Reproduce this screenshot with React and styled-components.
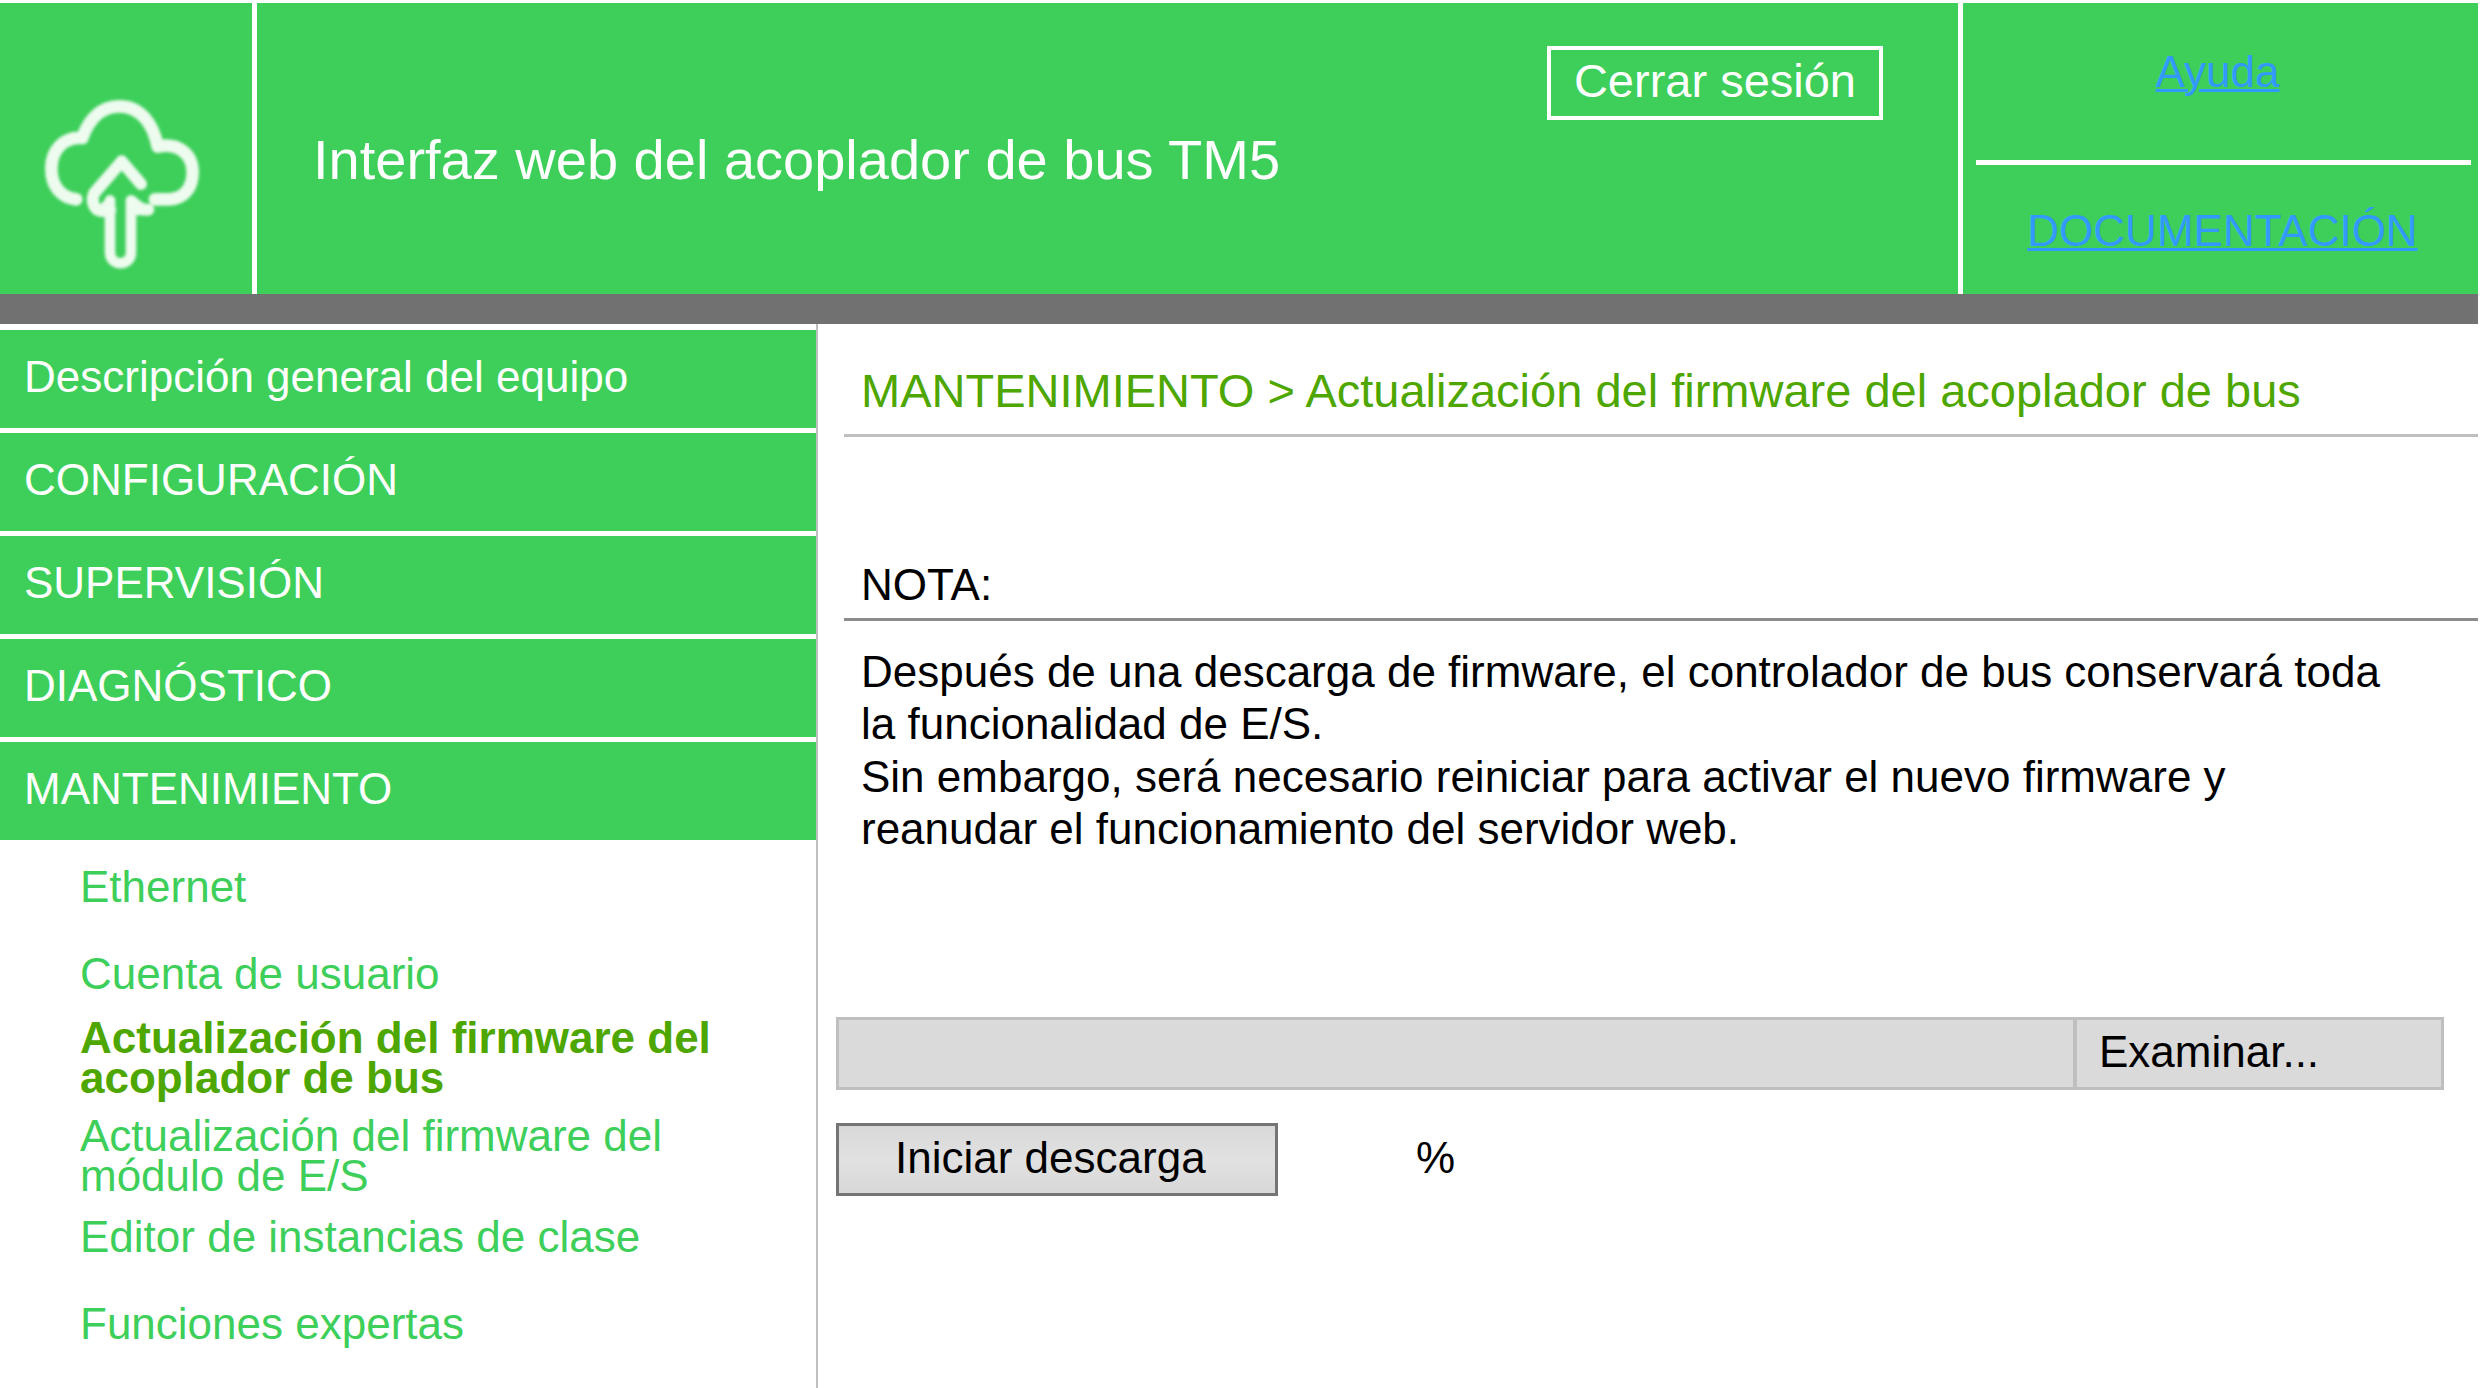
import React from 'react'
import styled, { createGlobalStyle } from 'styled-components'

const menu = [
  'Descripción general del equipo',
  'CONFIGURACIÓN',
  'SUPERVISIÓN',
  'DIAGNÓSTICO',
  'MANTENIMIENTO',
]

const submenu = [
  { label: 'Ethernet', gap: 47 },
  { label: 'Cuenta de usuario', gap: 24 },
  { label: 'Actualización del firmware del acoplador de bus', gap: 18, active: true },
  { label: 'Actualización del firmware del módulo de E/S', gap: 21 },
  { label: 'Editor de instancias de clase', gap: 47 },
  { label: 'Funciones expertas', gap: 0 },
]

const CloudIcon = () => (
  <Cloud viewBox="130 290 480 520" aria-hidden="true">
    <defs>
      <filter id="soft">
        <feGaussianBlur stdDeviation="4" />
      </filter>
    </defs>
    <g fill="none" stroke="#eefbef" strokeLinecap="round" filter="url(#soft)">
      {/* cloud outline, open at the bottom */}
      <path
        strokeWidth="38"
        strokeLinejoin="round"
        d="M230 597 C183 592 155 556 155 505 C155 448 193 409 248 413 C268 354 307 318 358 318 C420 318 460 366 474 439 C534 426 579 460 579 516 C579 566 549 597 508 597 L466 597"
      />
      {/* arrow head and stem */}
      <path
        strokeWidth="36"
        strokeLinejoin="round"
        d="M424 551 L366 483 L284 578 C274 598 280 630 306 632 L332 630"
      />
      <path
        strokeWidth="32"
        strokeLinejoin="round"
        d="M331 600 L331 755 C331 800 394 800 394 755 L394 600"
      />
      <path strokeWidth="36" strokeLinejoin="round" d="M397 604 L402 626 L446 628" />
      <path strokeWidth="22" d="M326 604 L308 622 M404 602 L426 618" />
    </g>
  </Cloud>
)

export default function App() {
  return (
    <Page>
      <GlobalStyle />
      <Header>
        <Brand>
          <CloudIcon />
        </Brand>
        <TitleBar>
          <h1>Interfaz web del acoplador de bus TM5</h1>
          <LogoutButton type="button">Cerrar sesión</LogoutButton>
        </TitleBar>
        <Links>
          <LinkCell>
            <a href="#ayuda">Ayuda</a>
          </LinkCell>
          <LinkDivider />
          <LinkCell>
            <a href="#documentacion">DOCUMENTACIÓN</a>
          </LinkCell>
        </Links>
      </Header>

      <Body>
        <Sidebar>
          <Menu>
            {menu.map((item) => (
              <li key={item}>
                <MenuLink href="#menu">{item}</MenuLink>
              </li>
            ))}
          </Menu>
          <SubMenu>
            {submenu.map((item) => (
              <SubItem key={item.label} $gap={item.gap}>
                <SubLink href="#submenu" $active={item.active}>
                  {item.label}
                </SubLink>
              </SubItem>
            ))}
          </SubMenu>
        </Sidebar>

        <Content>
          <Breadcrumb>MANTENIMIENTO &gt; Actualización del firmware del acoplador de bus</Breadcrumb>
          <NoteTitle>NOTA:</NoteTitle>
          <NoteText>
            <p>
              Después de una descarga de firmware, el controlador de bus conservará toda la
              funcionalidad de E/S.
            </p>
            <p>
              Sin embargo, será necesario reiniciar para activar el nuevo firmware y reanudar el
              funcionamiento del servidor web.
            </p>
          </NoteText>

          <FileRow>
            <FileName type="text" aria-label="Archivo de firmware" readOnly />
            <BrowseButton type="button">Examinar...</BrowseButton>
          </FileRow>
          <DownloadRow>
            <StartButton type="button">Iniciar descarga</StartButton>
            <span>%</span>
          </DownloadRow>
        </Content>
      </Body>
    </Page>
  )
}

const green = '#3dcf5a'
const darkGreen = '#4ea600'

const GlobalStyle = createGlobalStyle`
* {
  box-sizing: border-box;
}

body {
  margin: 0;
  background: #fff;
}

h1, h2, h3, p, ul {
  margin: 0;
  padding: 0;
  font-weight: 400;
}

ul {
  list-style: none;
}

button, input {
  font: inherit;
  color: inherit;
  border-radius: 0;
  margin: 0;
}
`

const Page = styled.div`
  display: flex;
  flex-direction: column;
  min-height: 100vh;
  padding: 3px 2px 0 0;
  font-family: "Liberation Sans", Arial, sans-serif;
  font-size: 44px;
  line-height: 50px;
  color: #000;
`

const Header = styled.header`
  display: grid;
  grid-template-columns: 252px 1fr 520px;
  min-height: 321px;
  background: ${green};
  border-bottom: 30px solid #717171;
`

const Brand = styled.div`
  padding: 94px 0 0 43px;
`

const Cloud = styled.svg`
  display: block;
  width: 160px;
  overflow: visible;
`

const TitleBar = styled.div`
  display: flex;
  align-items: center;
  justify-content: space-between;
  padding: 0 75px 0 56px;
  border-left: 5px solid #fff;
  color: #fff;

  h1 {
    padding-top: 22px;
    font-size: 56px;
    line-height: 64px;
  }
`

const LogoutButton = styled.button`
  align-self: flex-start;
  margin-top: 43px;
  padding: 6px 23px 10px;
  border: 4px solid #fff;
  background: none;
  font-size: 47px;
`

const Links = styled.div`
  padding-left: 4px;
  border-left: 5px solid #fff;
`

const LinkCell = styled.div`
  height: 157px;
  padding: 44px 10px 0 0;
  text-align: center;

  &:last-child {
    height: auto;
    padding: 41px 0 0;
  }

  a {
    color: #3399ff;
    text-decoration-thickness: 3px;
  }
`

const LinkDivider = styled.hr`
  height: 5px;
  margin: 0 7px 0 9px;
  border: 0;
  background: #fff;
`

const Body = styled.div`
  flex: 1;
  display: grid;
  grid-template-columns: 818px 1fr;
`

const Sidebar = styled.nav`
  padding-top: 6px;
  border-right: 2px solid #bfbfbf;
`

const Menu = styled.ul`
  display: grid;
  gap: 5px;
`

const MenuLink = styled.a`
  display: block;
  padding: 22px 24px 26px;
  background: ${green};
  color: #fff;
  text-decoration: none;
`

const SubMenu = styled.ul`
  padding: 27px 60px 0 80px;
`

const SubItem = styled.li`
  margin-bottom: ${(props) => props.$gap}px;
  line-height: 40px;
`

const SubLink = styled.a`
  display: block;
  color: ${(props) => (props.$active ? darkGreen : green)};
  font-weight: ${(props) => (props.$active ? 700 : 400)};
  text-decoration: none;
`

const Content = styled.main`
  padding-left: 18px;
`

const Breadcrumb = styled.h2`
  margin-left: 8px;
  padding: 40px 0 16px 17px;
  border-bottom: 3px solid #bfbfbf;
  color: ${darkGreen};
  font-size: 47px;
  line-height: 54px;
`

const NoteTitle = styled.h3`
  margin: 122px 0 0 8px;
  padding: 0 0 7px 17px;
  border-bottom: 3px solid #8c8c8c;
  font-size: 44px;
  line-height: 52px;
`

const NoteText = styled.div`
  padding: 25px 70px 0 25px;
  line-height: 52px;

  p + p {
    margin-top: 1px;
  }
`

const FileRow = styled.div`
  display: flex;
  height: 73px;
  margin: 162px 34px 33px 0;
`

const FileName = styled.input`
  flex: 1;
  min-width: 0;
  padding: 0 16px;
  border: 3px solid #bfbfbf;
  border-right: 0;
  background: #dadada;
`

const BrowseButton = styled.button`
  width: 371px;
  padding: 0 22px 4px;
  border: 3px solid #bfbfbf;
  border-left-width: 4px;
  background: #dadada;
  text-align: left;
`

const DownloadRow = styled.div`
  display: flex;
  align-items: center;
  gap: 138px;

  span {
    padding-bottom: 4px;
  }
`

const StartButton = styled.button`
  width: 442px;
  height: 73px;
  padding: 0 56px 4px;
  border: 3px solid #747474;
  background: linear-gradient(#d8d8d8, #e1e1e1 50%, #d8d8d8);
  text-align: left;
  white-space: nowrap;
`
